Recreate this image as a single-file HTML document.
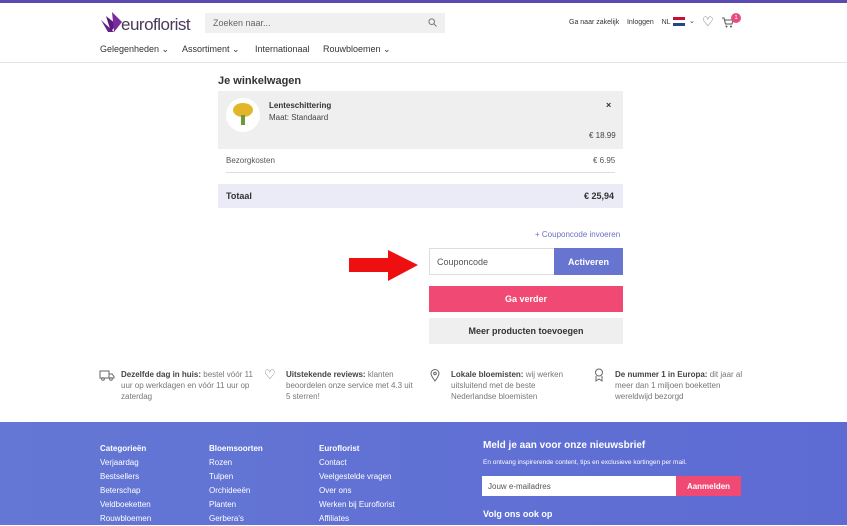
<!DOCTYPE html>
<html><head><meta charset="utf-8"><style>
*{margin:0;padding:0;box-sizing:border-box}
body{width:847px;height:525px;overflow:hidden;background:#fff;font-family:"Liberation Sans",sans-serif;color:#333;position:relative;font-size:9px}
.a{position:absolute}
.b{font-weight:bold}
</style></head><body>
<div class="a" style="left:0;top:0;width:847px;height:3px;background:#5b4bb0"></div>
<svg class="a" style="left:100px;top:12px" width="24" height="22" viewBox="0 0 24 22"><path d="M1 8 L8 20 L14 20 Z" fill="#6a1e8c"/><path d="M6 4 L11 20 L16 12 Z" fill="#5a1a7a"/><path d="M12 0 L14 20 L22 10 Z" fill="#7b2a9e"/></svg>
<div class="a" style="left:121px;top:15px;font-size:17px;color:#4a3a5a;letter-spacing:-0.5px">euroflorist</div>
<div class="a" style="left:205px;top:13px;width:240px;height:20px;background:#f0f0f0"></div>
<div class="a" style="left:213px;top:18px;color:#666;font-size:9px">Zoeken naar...</div>
<svg class="a" style="left:428px;top:18px" width="9" height="9" viewBox="0 0 9 9"><circle cx="3.7" cy="3.7" r="2.8" fill="none" stroke="#777" stroke-width="1"/><path d="M6 6 L8.5 8.5" stroke="#777"/></svg>
<div class="a" style="left:569px;top:19px;font-size:7px;color:#333">Ga naar zakelijk&nbsp;&nbsp;&nbsp; Inloggen&nbsp;&nbsp;&nbsp; NL</div>
<div class="a" style="left:673px;top:17px;width:12px;height:9px;background:linear-gradient(#c8102e 33%,#fff 33%,#fff 66%,#21468b 66%)"></div>
<div class="a" style="left:689px;top:17px;font-size:7px">⌄</div>
<div class="a" style="left:702px;top:14px;font-size:13px;color:#555">♡</div>
<svg class="a" style="left:722px;top:17px" width="12" height="11" viewBox="0 0 12 11"><path d="M0 1 H2 L3.5 7 H10 L11 3 H3" fill="none" stroke="#555" stroke-width="1"/><circle cx="4.5" cy="9.5" r="1" fill="#555"/><circle cx="9" cy="9.5" r="1" fill="#555"/></svg>
<div class="a" style="left:731px;top:13px;width:10px;height:10px;border-radius:50%;background:#e94b7b;color:#fff;font-size:6px;text-align:center;line-height:10px">1</div>
<div class="a" style="left:100px;top:44px;font-size:9px;color:#333">Gelegenheden ⌄</div>
<div class="a" style="left:182px;top:44px;font-size:9px;color:#333">Assortiment ⌄</div>
<div class="a" style="left:255px;top:44px;font-size:9px;color:#333">Internationaal</div>
<div class="a" style="left:323px;top:44px;font-size:9px;color:#333">Rouwbloemen ⌄</div>
<div class="a" style="left:0;top:62px;width:847px;height:1px;background:#e4e4e4"></div>
<div class="a b" style="left:218px;top:75px;font-size:11px;color:#333">Je winkelwagen</div>
<div class="a" style="left:218px;top:91px;width:405px;height:58px;background:#efefef"></div>
<div class="a" style="left:226px;top:98px;width:34px;height:34px;border-radius:50%;background:#fff"></div>
<div class="a" style="left:233px;top:103px;width:20px;height:14px;border-radius:50%;background:#e2b52a"></div>
<div class="a" style="left:241px;top:115px;width:4px;height:10px;background:#6f9a3a"></div>
<div class="a b" style="left:269px;top:101px;font-size:8px">Lenteschittering</div>
<div class="a" style="left:269px;top:113px;font-size:8px;color:#444">Maat: Standaard</div>
<div class="a b" style="left:606px;top:100px;font-size:9px">×</div>
<div class="a" style="left:589px;top:131px;font-size:8px;color:#444">€ 18.99</div>
<div class="a" style="left:226px;top:156px;font-size:8px;color:#555">Bezorgkosten</div>
<div class="a" style="left:593px;top:156px;font-size:8px;color:#555">€ 6.95</div>
<div class="a" style="left:226px;top:172px;width:389px;height:1px;background:#ddd"></div>
<div class="a" style="left:218px;top:184px;width:405px;height:24px;background:#ebebf7"></div>
<div class="a b" style="left:226px;top:191px;font-size:9px">Totaal</div>
<div class="a b" style="left:584px;top:191px;font-size:9px">€ 25,94</div>
<div class="a" style="left:535px;top:230px;font-size:8px;color:#6a70c8">+ Couponcode invoeren</div>
<svg class="a" style="left:348px;top:249px" width="72" height="34" viewBox="0 0 72 34"><path d="M1 9 H40 V1 L70 16 L40 32 V23 H1 Z" fill="#ee1010"/></svg>
<div class="a" style="left:429px;top:248px;width:126px;height:27px;border:1px solid #ddd"></div>
<div class="a" style="left:437px;top:257px;font-size:9px;color:#555">Couponcode</div>
<div class="a b" style="left:554px;top:248px;width:69px;height:27px;background:#6774d0;color:#fff;font-size:9px;display:flex;align-items:center;justify-content:center">Activeren</div>
<div class="a b" style="left:429px;top:286px;width:194px;height:26px;background:#f04a74;color:#fff;font-size:9px;display:flex;align-items:center;justify-content:center">Ga verder</div>
<div class="a b" style="left:429px;top:318px;width:194px;height:26px;background:#efefef;color:#333;font-size:9px;display:flex;align-items:center;justify-content:center">Meer producten toevoegen</div>
<svg class="a" style="left:99px;top:370px" width="16" height="11" viewBox="0 0 16 11"><path d="M1 1 H10 V8 H1 Z M10 4 H13 L15 6.5 V8 H10" fill="none" stroke="#666"/><circle cx="4" cy="9" r="1.3" fill="#fff" stroke="#666"/><circle cx="12" cy="9" r="1.3" fill="#fff" stroke="#666"/></svg>
<div class="a" style="left:121px;top:369px;width:132px;font-size:8px;line-height:11px;color:#777"><b style="color:#444">Dezelfde dag in huis:</b> bestel vóór 11 uur op werkdagen en vóór 11 uur op zaterdag</div>
<div class="a" style="left:264px;top:367px;font-size:13px;color:#666">♡</div>
<div class="a" style="left:286px;top:369px;width:128px;font-size:8px;line-height:11px;color:#777"><b style="color:#444">Uitstekende reviews:</b> klanten beoordelen onze service met 4.3 uit 5 sterren!</div>
<svg class="a" style="left:430px;top:369px" width="10" height="13" viewBox="0 0 10 13"><path d="M5 12 C2 8 1 6 1 4.5 A4 4 0 0 1 9 4.5 C9 6 8 8 5 12Z" fill="none" stroke="#666"/><circle cx="5" cy="4.5" r="1.3" fill="none" stroke="#666"/></svg>
<div class="a" style="left:451px;top:369px;width:125px;font-size:8px;line-height:11px;color:#777"><b style="color:#444">Lokale bloemisten:</b> wij werken uitsluitend met de beste Nederlandse bloemisten</div>
<svg class="a" style="left:594px;top:368px" width="10" height="14" viewBox="0 0 10 14"><circle cx="5" cy="4.5" r="3.5" fill="none" stroke="#666"/><path d="M2 8 V13 L5 11 L8 13 V8" fill="none" stroke="#666"/></svg>
<div class="a" style="left:615px;top:369px;width:130px;font-size:8px;line-height:11px;color:#777"><b style="color:#444">De nummer 1 in Europa:</b> dit jaar al meer dan 1 miljoen boeketten wereldwijd bezorgd</div>
<div class="a" style="left:0;top:422px;width:847px;height:103px;background:linear-gradient(90deg,#6477d4,#5d6bd3)"></div>
<div class="a" style="left:100px;top:442px;color:#fff;font-size:8px;line-height:14px"><b>Categorieën</b><br>Verjaardag<br>Bestsellers<br>Beterschap<br>Veldboeketten<br>Rouwbloemen</div>
<div class="a" style="left:209px;top:442px;color:#fff;font-size:8px;line-height:14px"><b>Bloemsoorten</b><br>Rozen<br>Tulpen<br>Orchideeën<br>Planten<br>Gerbera's</div>
<div class="a" style="left:319px;top:442px;color:#fff;font-size:8px;line-height:14px"><b>Euroflorist</b><br>Contact<br>Veelgestelde vragen<br>Over ons<br>Werken bij Euroflorist<br>Affiliates</div>
<div class="a b" style="left:483px;top:440px;color:#fff;font-size:10px">Meld je aan voor onze nieuwsbrief</div>
<div class="a" style="left:483px;top:459px;color:#fff;font-size:6.5px">En ontvang inspirerende content, tips en exclusieve kortingen per mail.</div>
<div class="a" style="left:482px;top:476px;width:194px;height:20px;background:#fff"></div>
<div class="a" style="left:488px;top:482px;font-size:8px;color:#555">Jouw e-mailadres</div>
<div class="a b" style="left:676px;top:476px;width:65px;height:20px;background:#f04a74;color:#fff;font-size:8px;display:flex;align-items:center;justify-content:center">Aanmelden</div>
<div class="a b" style="left:483px;top:509px;color:#fff;font-size:9px">Volg ons ook op</div>
</body></html>
